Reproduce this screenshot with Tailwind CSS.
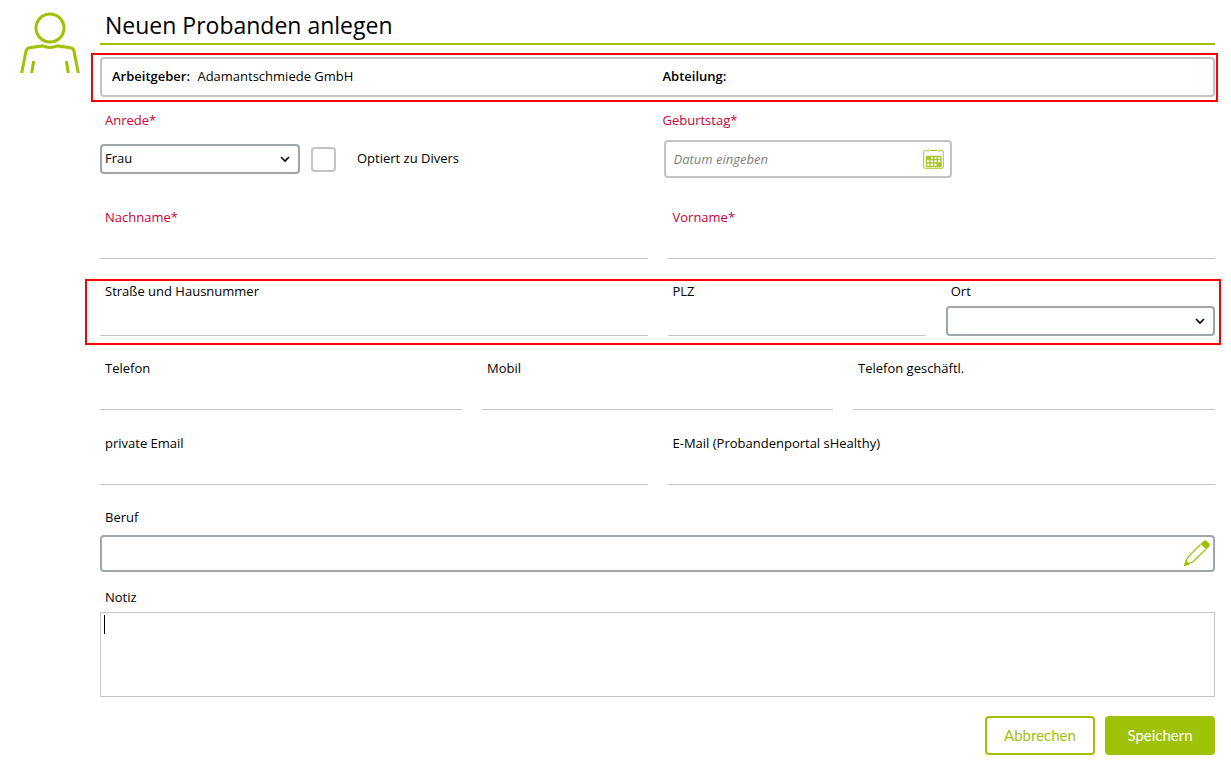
<!DOCTYPE html>
<html lang="de">
<head>
    <meta charset="UTF-8">
    <meta name="viewport" content="width=device-width, initial-scale=1.0">
    <title>Neuen Probanden anlegen</title>
    <script src="https://cdn.jsdelivr.net/npm/@tailwindcss/browser@4"></script>
</head>
<body class="bg-white font-['Open_Sans',sans-serif] text-[13px] leading-5 text-black">
    <div class="flex gap-5 pl-5 pr-4">
        <svg class="w-[60px] h-[73px] shrink-0" viewBox="0 0 60 73" fill="none" stroke="#9fc207" stroke-width="3" aria-hidden="true">
            <circle cx="30" cy="28" r="14"/>
            <path d="M1.500 74 L6 51 Q6.700 48.300 9.500 47.800 L22.500 45.900 Q30 49.100 37.500 45.900 L50.500 47.800 Q53.300 48.300 54 51 L58.500 74"/>
            <path d="M11.500 74 L13.700 61 M48.500 74 L46.300 61"/>
        </svg>
        <form class="flex-1 min-w-0">
            <h1 class="border-b-2 border-[#9fc207] pl-[5px] pt-2.5 pb-[3px] text-[23px] leading-[30px]">Neuen Probanden anlegen</h1>

            <!-- Arbeitgeber / Abteilung -->
            <div class="mt-2 -ml-[9px] -mr-[3px] border-2 border-[#f00] pt-0.5 pb-[3px] pl-[7px] pr-px">
                <div class="grid grid-cols-2 items-center h-10 rounded border-2 border-[#c4c4c4] pb-0.5">
                    <div class="pl-2.5"><b class="font-semibold">Arbeitgeber:</b> <span class="pl-1">Adamantschmiede GmbH</span></div>
                    <div class="pl-[5px]"><b class="font-semibold">Abteilung:</b></div>
                </div>
            </div>

            <div class="mt-2 grid grid-cols-2">
                <div>
                    <label for="anrede" class="block pl-[5px] text-[#cc0033]">Anrede*</label>
                    <div class="mt-2.5 flex h-[38px] items-center">
                        <div class="relative w-[200px]">
                            <select id="anrede" class="block w-full h-[30px] appearance-none rounded border-2 border-[#a0a7aa] bg-white pl-[3px] pr-6 pb-0.5">
                                <option>Frau</option>
                                <option>Herr</option>
                            </select>
                            <svg class="pointer-events-none absolute right-2.5 top-3 w-2.5 h-2" viewBox="0 0 10 8" fill="none" stroke="#000" stroke-width="1.7"><path d="M1 1 L5 5 L9 1"/></svg>
                        </div>
                        <input type="checkbox" id="divers" class="ml-[11px] size-[25px] appearance-none rounded border-2 border-[#c4c4c4]">
                        <label for="divers" class="ml-[21px] pb-0.5">Optiert zu Divers</label>
                    </div>
                </div>
                <div>
                    <label for="geburtstag" class="block pl-[5px] text-[#cc0033]">Geburtstag*</label>
                    <div class="relative mt-2.5 ml-1.5 w-[288px]">
                        <input type="text" id="geburtstag" placeholder="Datum eingeben" class="block w-full h-[38px] rounded border-2 border-[#c4c4c4] pl-2 pr-9 placeholder:italic placeholder:text-[#808080]">
                        <button type="button" aria-label="Kalender" class="absolute right-2 top-2">
                            <svg class="w-[21px] h-[22px]" viewBox="0 0 21 22" fill="none" stroke="#a9c62a">
                                <path d="M3.500 2.500 H2 Q0.700 2.500 0.700 4 V18.800 Q0.700 20.300 2 20.300 H19 Q20.300 20.300 20.300 18.800 V4 Q20.300 2.500 19 2.500 H17.500 M6.500 2.500 H14.500"/>
                                <path d="M5 1 V4 M16 1 V4"/>
                                <path d="M3.500 8.500 H18 V18.500 H3.500 Z M3.500 11.500 H18 M3.500 15 H18 M7 8 V18.500 M10.700 8 V18.500 M14.300 8 V18.500" stroke-width="1.3"/>
                                <path d="M3.500 8.500 H7 V11.500 H3.500 Z M14.300 15 H18 V18.500 H14.300 Z" fill="#a9c62a"/>
                            </svg>
                        </button>
                    </div>
                </div>
            </div>

            <div class="mt-[29px] grid grid-cols-2 gap-5">
                <div>
                    <label for="nachname" class="block pl-[5px] text-[#cc0033]">Nachname*</label>
                    <input type="text" id="nachname" class="block w-full h-8 border-b border-[#c4c4c4] px-[5px]">
                </div>
                <div>
                    <label for="vorname" class="block pl-[5px] text-[#cc0033]">Vorname*</label>
                    <input type="text" id="vorname" class="block w-full h-8 border-b border-[#c4c4c4] px-[5px]">
                </div>
            </div>

            <!-- Adresse -->
            <div class="mt-5 -ml-[15px] -mr-1.5 border-2 border-[#f00] pb-[7px] pl-[13px] pr-1">
                <div class="grid grid-cols-2 gap-5">
                    <div>
                        <label for="strasse" class="block pl-[5px]">Straße und Hausnummer</label>
                        <input type="text" id="strasse" class="block w-full h-[35px] border-b border-[#c4c4c4] px-[5px]">
                    </div>
                    <div class="grid grid-cols-[258fr_269fr] gap-5">
                        <div>
                            <label for="plz" class="block pl-[5px]">PLZ</label>
                            <input type="text" id="plz" class="block w-full h-[35px] border-b border-[#c4c4c4] px-[5px]">
                        </div>
                        <div>
                            <label for="ort" class="block pl-[5px]">Ort</label>
                            <div class="relative mt-[5px]">
                                <select id="ort" class="block w-full h-[30px] appearance-none rounded border-2 border-[#a0a7aa] bg-white pl-[3px] pr-6">
                                    <option></option>
                                </select>
                                <svg class="pointer-events-none absolute right-2.5 top-3 w-2.5 h-2" viewBox="0 0 10 8" fill="none" stroke="#000" stroke-width="1.7"><path d="M1 1 L5 5 L9 1"/></svg>
                            </div>
                        </div>
                    </div>
                </div>
            </div>

            <div class="mt-[13px] grid grid-cols-[362fr_351fr_362fr] gap-5">
                <div>
                    <label for="telefon" class="block pl-[5px]">Telefon</label>
                    <input type="tel" id="telefon" class="block w-full h-8 border-b border-[#c4c4c4] px-[5px]">
                </div>
                <div>
                    <label for="mobil" class="block pl-[5px]">Mobil</label>
                    <input type="tel" id="mobil" class="block w-full h-8 border-b border-[#c4c4c4] px-[5px]">
                </div>
                <div>
                    <label for="telefon-g" class="block pl-[5px]">Telefon geschäftl.</label>
                    <input type="tel" id="telefon-g" class="block w-full h-8 border-b border-[#c4c4c4] px-[5px]">
                </div>
            </div>

            <div class="mt-[23px] grid grid-cols-2 gap-5">
                <div>
                    <label for="email" class="block pl-[5px]">private Email</label>
                    <input type="email" id="email" class="block w-full h-8 border-b border-[#c4c4c4] px-[5px]">
                </div>
                <div>
                    <label for="email-portal" class="block pl-[5px]">E-Mail (Probandenportal sHealthy)</label>
                    <input type="email" id="email-portal" class="block w-full h-8 border-b border-[#c4c4c4] px-[5px]">
                </div>
            </div>

            <label for="beruf" class="mt-[22px] block pl-[5px]">Beruf</label>
            <div class="relative mt-2">
                <input type="text" id="beruf" class="block w-full h-[37px] rounded border-2 border-[#a0a7aa] pl-[5px] pr-9">
                <button type="button" aria-label="Beruf bearbeiten" class="absolute right-[5px] top-[5px]">
                    <svg class="size-[26px]" viewBox="0 0 26 26" fill="none" stroke="#9fc207" stroke-width="1.3">
                        <path d="M16.500 4.500 L3.500 17.500 L0.800 25 L8.500 22.300 L21.500 9.500"/>
                        <path d="M0.800 25.300 L2.100 21 L5 24 Z" fill="#9fc207"/>
                        <path d="M17.500 4 L20 1.500 Q21.200 0.500 22.300 1.500 L24.800 4 Q25.500 5 24.800 6 L22.300 8.600 Z" fill="#9fc207"/>
                    </svg>
                </button>
            </div>

            <label for="notiz" class="mt-[15px] block pl-[5px]">Notiz</label>
            <div class="relative mt-[5px]">
                <textarea id="notiz" class="block w-full h-[85px] resize-none border border-[#c4c4c4] px-[3px] py-0.5 caret-transparent"></textarea>
                <span class="pointer-events-none absolute left-1 top-[3px] w-px h-[19px] bg-black"></span>
            </div>

            <div class="mt-[19px] flex justify-end gap-2.5 font-['Lato',sans-serif] text-[15px]">
                <button type="button" class="w-[110px] h-[39px] rounded border-2 border-[#9fc207] bg-white pb-0.5 text-[#9fc207]">Abbrechen</button>
                <button type="submit" class="w-[110px] h-[39px] rounded border-2 border-[#9fc207] bg-[#9fc207] pb-0.5 text-white">Speichern</button>
            </div>
        </form>
    </div>
</body>
</html>
